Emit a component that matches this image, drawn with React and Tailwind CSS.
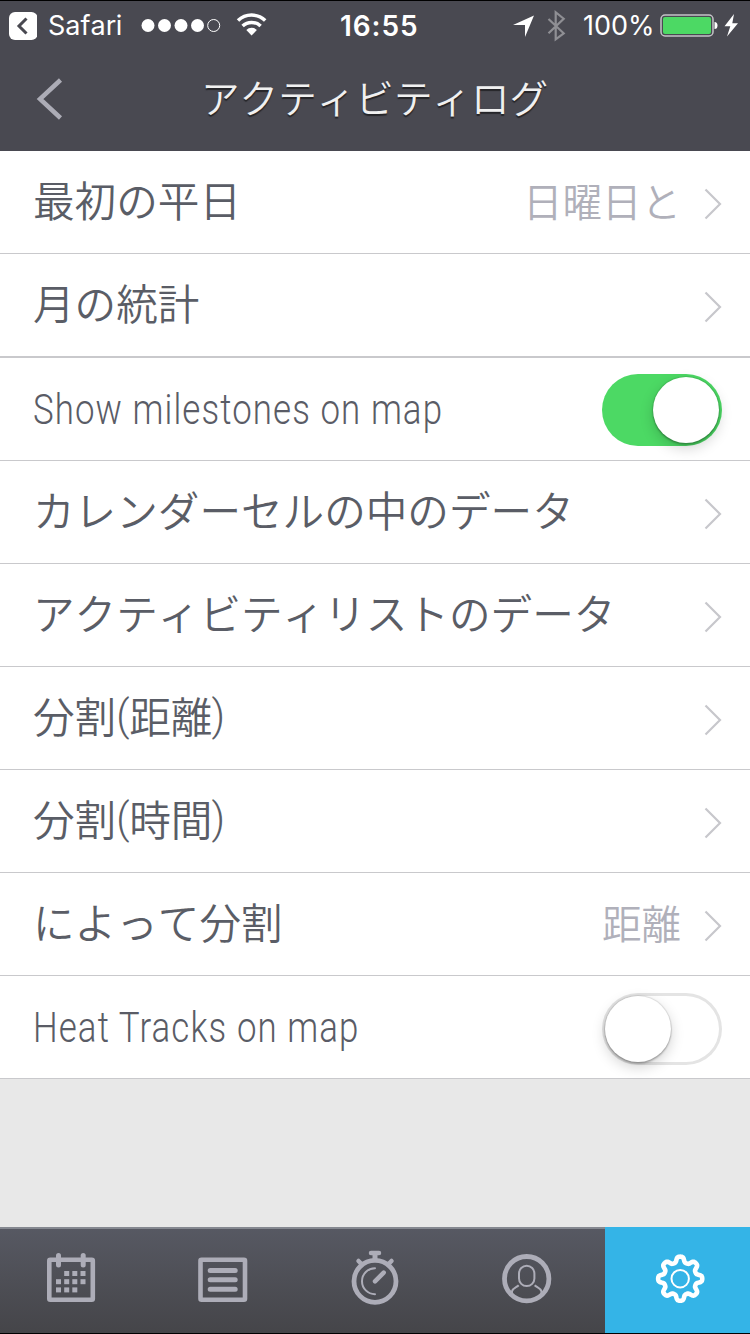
import React, { useState } from 'react';

const rows = [
  { label: '最初の平日', value: '日曜日と' },
  { label: '月の統計', thick: true },
  { label: 'Show milestones on map', toggle: true, on: true, latin: true },
  { label: 'カレンダーセルの中のデータ' },
  { label: 'アクティビティリストのデータ' },
  { label: '分割', unit: '距離' },
  { label: '分割', unit: '時間' },
  { label: 'によって分割', value: '距離' },
  { label: 'Heat Tracks on map', toggle: true, on: false, latin: true },
];

// eight rounded teeth around the origin
const gearPath = Array.from({ length: 161 }, (_, i) => {
  const a = (i / 160) * Math.PI * 2;
  const r = 19.3 + 2.9 * Math.tanh(1.8 * Math.cos(8 * a));
  return `${i ? 'L' : 'M'}${(r * Math.cos(a)).toFixed(2)} ${(r * Math.sin(a)).toFixed(2)}`;
}).join('') + 'Z';

const StatusBar = () => (
  <div className="flex h-[50px] items-center border-t border-black font-['Inter',sans-serif] text-white">
    <svg className="ml-[9px] h-7 w-7 shrink-0" viewBox="0 0 28 28">
      <rect width="28.5" height="28" rx="6" fill="#fff" />
      <path d="M17.5 6.5 10 14l7.5 7.5" fill="none" stroke="#494951" strokeWidth="3" />
    </svg>
    <span className="ml-[11px] w-[93px] shrink-0 text-[27px] leading-none">Safari</span>
    <svg className="h-[28px] w-[126px] shrink-0" viewBox="0 0 126 28" fill="#fff">
      <circle cx="7" cy="13.5" r="6.5" />
      <circle cx="23.5" cy="13.5" r="6.5" />
      <circle cx="40" cy="13.5" r="6.5" />
      <circle cx="56.5" cy="13.5" r="6.5" />
      <circle cx="72.7" cy="13.5" r="6" fill="none" stroke="#fff" />
      <g fill="none" stroke="#fff" strokeWidth="3.5">
        <path d="M97 8.6a19.5 19.5 0 0 1 27.2 0" />
        <path d="M101.6 14a13 13 0 0 1 18 0" />
      </g>
      <path d="M105.3 18a7.6 7.6 0 0 1 10.6 0l-5.3 5.5z" />
    </svg>
    <span className="ml-[73px] w-[173px] shrink-0 text-[28px] font-semibold leading-none tracking-[0.9px]">16:55</span>
    <svg className="h-[34px] w-[56px] shrink-0" viewBox="0 0 56 34">
      <path d="M0 16 21 6.5 12 28v-12z" fill="#fff" />
      <path d="m35.5 10 15.2 14.3-8 6V3.2l8 6.5-15.2 14.6" fill="none" stroke="#8f8f94" strokeWidth="2.2" />
    </svg>
    <span className="ml-[14px] w-[77px] shrink-0 text-[27px] leading-none">100%</span>
    <svg className="h-[28px] w-[80px] shrink-0" viewBox="0 0 80 28">
      <rect x="1" y="3" width="52" height="21" rx="4" fill="none" stroke="#c4c4c7" strokeWidth="1.5" />
      <rect x="3" y="5" width="48" height="17" rx="2" fill="#4cd964" />
      <path d="M54.5 10q3 0 3 3.5t-3 3.5z" fill="#fff" />
      <path d="M74 2 64.5 14.3h5.8L67 24.5l11-13.2h-5.7z" fill="#fff" />
    </svg>
  </div>
);

const Toggle = ({ on, onClick }) => (
  <button
    role="switch"
    aria-checked={on}
    onClick={onClick}
    className={`flex h-[72px] w-[120px] rounded-full p-[3px] ${on ? 'mt-[2px] justify-end bg-[#4cd964]' : 'mt-1 bg-white shadow-[inset_0_0_0_3px_#e4e4e4]'}`}
  >
    <span className="h-[66px] w-[66px] rounded-full bg-white shadow-[0_5px_14px_rgba(0,0,0,0.18),0_2px_2px_rgba(0,0,0,0.2),0_0_1px_1px_rgba(0,0,0,0.1)]" />
  </button>
);

const Chevron = () => (
  <svg className="ml-[23px] h-[34px] w-[18px] shrink-0" viewBox="0 0 18 34">
    <path d="m1.5 2.5 14.5 14.5-14.5 14.5" fill="none" stroke="#c7c7cc" strokeWidth="2.2" />
  </svg>
);

const Row = ({ row, on, onToggle }) => (
  <div
    className={`flex items-center justify-between pl-[33px] pr-7 border-[#c9c9cc] ${row.thick ? 'h-[104px] border-b-2' : 'h-[103px] border-b'}`}
  >
    {row.latin ? (
      <span className="origin-left scale-x-[0.83] whitespace-nowrap pt-px font-['Roboto',sans-serif] text-[42px] font-light leading-none tracking-[1.3px] text-[#5a5c66] [font-kerning:normal]">
        {row.label}
      </span>
    ) : (
      <span className="flex whitespace-nowrap pb-[5px] text-[41.6px] font-[350] leading-none text-[#5a5d66]">
        {row.label}
        {row.unit && (
          <>
            <span className="w-[13px] font-['Roboto',sans-serif] font-light">(</span>
            {row.unit}
            <span className="-ml-px font-['Roboto',sans-serif] font-light">)</span>
          </>
        )}
      </span>
    )}
    {row.toggle ? (
      <Toggle on={on} onClick={onToggle} />
    ) : (
      <div className="flex items-center pt-1">
        <span className="pb-[9px] text-[39.5px] font-[350] leading-none text-[#b0b0ba]">{row.value}</span>
        <Chevron />
      </div>
    )}
  </div>
);

const CalendarIcon = () => (
  <svg className="h-14 w-14" viewBox="-28 -28 56 56" fill="#adadb8">
    <rect x="-21.7" y="-17.3" width="43.5" height="40" rx="1" fill="none" stroke="#adadb8" strokeWidth="4.6" />
    <rect x="-15" y="-24" width="5" height="14.5" rx="2.5" />
    <rect x="9.7" y="-24" width="5" height="14.5" rx="2.5" />
    {[[-6.8, -6], [1.3, -6], [9.5, -6], [-15, 2.2], [-6.8, 2.2], [1.3, 2.2], [9.5, 2.2], [-15, 10.4], [-6.8, 10.4], [1.3, 10.4]].map(([x, y]) => (
      <rect key={`${x},${y}`} x={x} y={y} width="5" height="5" />
    ))}
  </svg>
);

const ListIcon = () => (
  <svg className="h-14 w-14" viewBox="-28 -28 56 56" fill="none" stroke="#adadb8">
    <rect x="-22.5" y="-17.3" width="44.5" height="40" rx="1" strokeWidth="4.6" />
    <path d="M-12.8-6.5h25M-12.8 2.8h25M-12.8 12.2h25" strokeWidth="5" strokeLinecap="round" />
  </svg>
);

const StopwatchIcon = () => (
  <svg className="h-14 w-14" viewBox="-28 -28 56 56" fill="none" stroke="#adadb8" strokeLinecap="round">
    <circle cx="0" cy="4.3" r="21" strokeWidth="4.8" />
    <path d="M-4-24h8M-16.5-16l3 3M16.5-16l-3 3" strokeWidth="4.5" />
    <path d="M0-24v7" strokeWidth="5" strokeLinecap="butt" />
    <path d="m0 4.3 8.7-8.7" strokeWidth="4.5" />
    <path d="M0-8.8a13 13 0 0 0 0 26" strokeWidth="2" />
  </svg>
);

const ProfileIcon = () => (
  <svg className="h-14 w-14" viewBox="-28 -28 56 56" fill="none" stroke="#adadb8">
    <circle cx="-.3" cy="1.7" r="22.2" strokeWidth="4.8" />
    <rect x="-8" y="-11.2" width="15.4" height="20.3" rx="7.7" strokeWidth="2" />
    <path d="M-8.3 8.3c-2 2-6 3-6.7 6v4M7.7 8.3c2 2 6 3 6.7 6v4" strokeWidth="2" />
  </svg>
);

const GearIcon = () => (
  <svg className="h-14 w-14" viewBox="-28 -28 56 56" fill="none" stroke="#fff">
    <g transform="translate(.2 1.7)">
      <path d={gearPath} strokeWidth="4.6" strokeLinejoin="round" />
      <circle r="8.7" strokeWidth="2" />
    </g>
  </svg>
);

const TabBar = () => (
  <nav className="flex h-[107px] border-b border-black bg-linear-to-b from-[#575963] to-[#454549]">
    {[CalendarIcon, ListIcon, StopwatchIcon, ProfileIcon].map((Icon, i) => (
      <div
        key={i}
        className={`flex items-center justify-center border-t-2 border-[#858890] pb-[8px] ${i === 3 ? 'w-[149px] pr-[7px]' : 'w-[152px] pr-[10px]'}`}
      >
        <Icon />
      </div>
    ))}
    <div className="flex flex-1 items-center justify-center bg-[#34b4e7] pl-[4px] pb-[6px]">
      <GearIcon />
    </div>
  </nav>
);

export default function App() {
  const [toggles, setToggles] = useState(rows.map((r) => !!r.on));

  const flip = (i) => setToggles(toggles.map((t, j) => (j === i ? !t : t)));

  return (
    <div className="flex h-[1334px] w-[750px] flex-col overflow-hidden bg-[#e8e8e8] font-['Noto_Sans_CJK_JP',sans-serif] [font-kerning:none]">
      <header className="h-[151px] bg-[#494951]">
        <StatusBar />
        <div className="flex h-[98px] items-center">
          <svg className="ml-9 h-[42px] w-[28px] shrink-0" viewBox="0 0 28 42">
            <path d="M24.5 2 4 21l20.5 19" fill="none" stroke="#acacb6" strokeWidth="4.5" />
          </svg>
          <h1 className="ml-[137px] whitespace-nowrap pb-[6px] text-[38.6px] font-[350] leading-none text-[#f0f0f0] [text-shadow:0_2px_1px_rgba(0,0,0,0.5)]">
            アクティビティログ
          </h1>
        </div>
      </header>
      <main className="flex-1">
        <div className="bg-white">
          {rows.map((row, i) => (
            <Row key={i} row={row} on={toggles[i]} onToggle={() => flip(i)} />
          ))}
        </div>
      </main>
      <TabBar />
    </div>
  );
}
